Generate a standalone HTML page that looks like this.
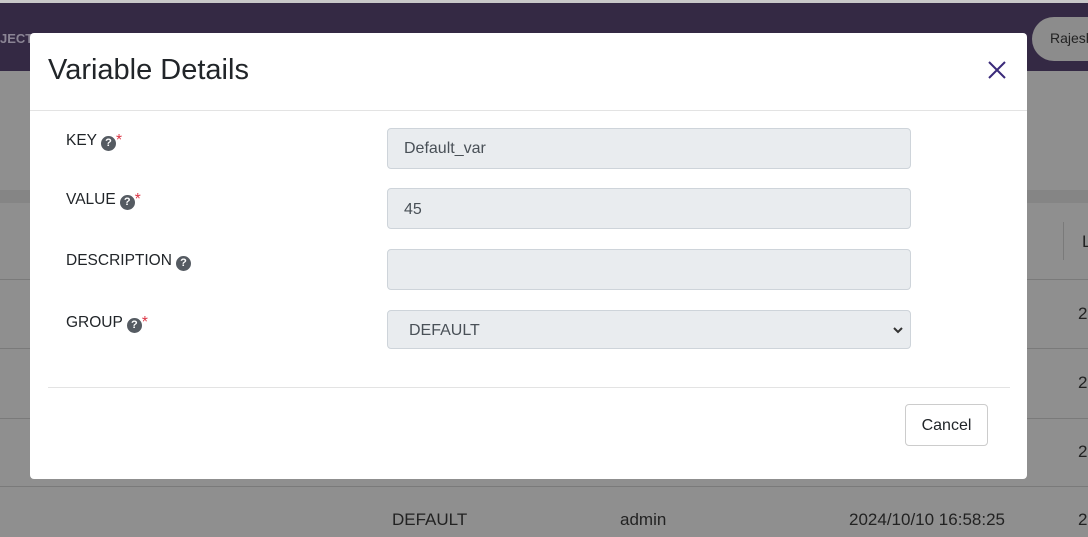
<!DOCTYPE html>
<html><head><style>
*{box-sizing:border-box;margin:0;padding:0}
body{width:1088px;height:537px;overflow:hidden;position:relative;background:#8f8f8f;font-family:"Liberation Sans",sans-serif;}
.nav{position:absolute;left:0;top:3px;width:1088px;height:68px;background:#342944;}
.topstrip{position:absolute;left:0;top:0;width:1088px;height:3px;background:#c8c8c8}
.navt{position:absolute;top:28px;color:#8a8494;font-size:13px;font-weight:bold}
.user{position:absolute;left:1032px;top:14px;width:80px;height:44px;border-radius:22px;background:#8c8c8c;color:#222;font-size:14px;padding:13px 0 0 18px}
.band{position:absolute;left:0;top:190px;width:1088px;height:13px;background:#858585}
.line{position:absolute;left:0;width:1088px;height:1px;background:#7a7a7a}
.cell{position:absolute;color:#222;font-size:17px}
.modal{position:absolute;left:30px;top:33px;width:997px;height:446px;background:#fff;border-radius:4px;}
.title{position:absolute;left:18px;top:21px;font-size:29px;color:#212529}
.hdr{position:absolute;left:0;top:77px;width:997px;height:1px;background:#e3e3e3}
.lbl{position:absolute;left:36px;font-size:15.5px;color:#212529}
.q{display:inline-block;width:15px;height:15px;border-radius:8px;background:#555b62;color:#fff;font-size:11px;font-weight:bold;text-align:center;line-height:15px;vertical-align:-1px;margin-left:4px}
.req{color:#dc3545}
.inp{position:absolute;left:357px;width:524px;background:#e9ecef;border:1px solid #ced4da;border-radius:4px;font-size:16px;color:#495057;padding-left:16px}
.ftr{position:absolute;left:18px;top:354px;width:962px;height:1px;background:#e3e3e3}
.btn{position:absolute;left:875px;top:371px;width:83px;height:42px;border:1px solid #ccc;border-radius:4px;font-size:16px;color:#212529;text-align:center;line-height:42px}
</style></head><body>
<div class="topstrip"></div>
<div class="nav">
<span class="navt" style="left:0">JECTS</span>
<span class="navt" style="left:86px">○○ APPLICATIONS</span>
<span class="navt" style="left:256px">▭ EXECUTIONS</span>
<span class="navt" style="left:415px">◇ MODELS</span>
<span class="navt" style="left:542px">⌂ DATA QUALITY</span>
<span class="navt" style="left:714px">♙ ADMINISTRATION</span>
<div class="user">Rajesh</div>
</div>
<div class="band"></div>
<div class="line" style="top:279px"></div>
<div class="line" style="top:348px"></div>
<div class="line" style="top:418px"></div>
<div class="line" style="top:486px"></div>
<div style="position:absolute;left:1063px;top:222px;width:1px;height:38px;background:#7a7a7a"></div>
<div class="cell" style="left:1082px;top:232px">L</div>
<div class="cell" style="left:1078px;top:304px">2</div>
<div class="cell" style="left:1078px;top:373px">2</div>
<div class="cell" style="left:1078px;top:442px">2</div>
<div class="cell" style="left:392px;top:510px">DEFAULT</div>
<div class="cell" style="left:620px;top:510px">admin</div>
<div class="cell" style="left:849px;top:510px">2024/10/10 16:58:25</div>
<div class="cell" style="left:1078px;top:510px">2</div>

<div class="modal">
<div class="title">Variable Details</div>
<svg style="position:absolute;left:958px;top:28px" width="18" height="18" viewBox="0 0 18 18"><path d="M1 1L17 17M17 1L1 17" stroke="#3a2a7a" stroke-width="2"/></svg>
<div class="hdr"></div>
<div class="lbl" style="top:99px">KEY<span class="q">?</span><span class="req">*</span></div>
<div class="lbl" style="top:158px">VALUE<span class="q">?</span><span class="req">*</span></div>
<div class="lbl" style="top:219px">DESCRIPTION<span class="q">?</span></div>
<div class="lbl" style="top:281px">GROUP<span class="q">?</span><span class="req">*</span></div>
<div class="inp" style="top:95px;height:41px;line-height:39px">Default_var</div>
<div class="inp" style="top:155px;height:41px;line-height:41px">45</div>
<div class="inp" style="top:216px;height:41px"></div>
<div class="inp" style="top:277px;height:39px;line-height:39px;padding-left:21px">DEFAULT
<svg style="position:absolute;right:6px;top:15px" width="12" height="8" viewBox="0 0 12 8"><path d="M2 2L6 6L10 2" stroke="#333" stroke-width="2" fill="none"/></svg></div>
<div class="ftr"></div>
<div class="btn">Cancel</div>
</div>
</body></html>
